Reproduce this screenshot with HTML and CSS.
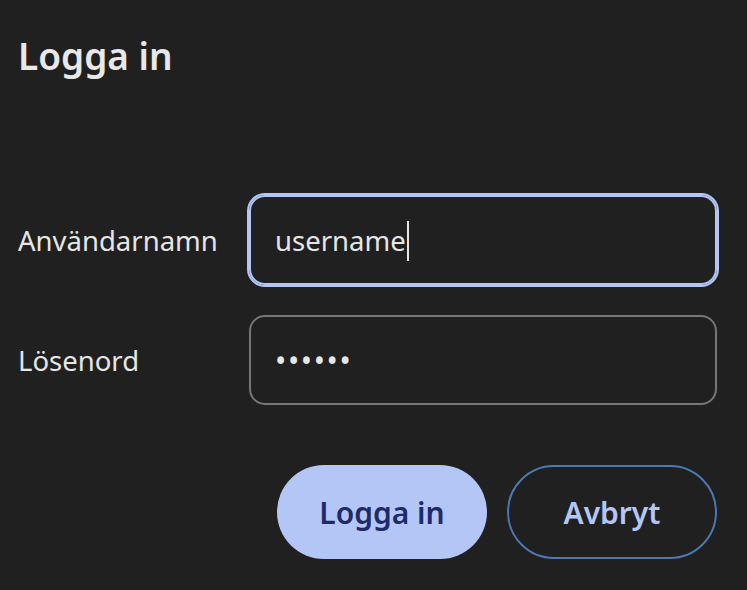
FILE: index.html
```html
<!DOCTYPE html>
<html lang="sv">
<head>
<meta charset="utf-8">
<title>Logga in</title>
<link rel="stylesheet" href="styles.css">
</head>
<body>
<main class="dialog">
  <h1 class="title">Logga in</h1>
  <form class="form">
    <label class="label" for="user">Användarnamn</label>
    <div class="field field-focused" id="user"><span class="value">username</span><span class="caret"></span></div>
    <label class="label" for="pass">Lösenord</label>
    <div class="field" id="pass"><span class="value dots">••••••</span></div>
  </form>
  <div class="actions">
    <button class="btn btn-primary" type="button">Logga in</button>
    <button class="btn btn-outline" type="button">Avbryt</button>
  </div>
</main>
</body>
</html>
```
FILE: styles.css
```css
html, body {
  margin: 0;
  padding: 0;
  background: #202020;
}
body {
  font-family: "Noto Sans", "Open Sans", sans-serif;
  color: #e6e6e6;
}
.dialog {
  padding: 32px 30px 0 18px;
}
.title {
  margin: 0;
  font-size: 37px;
  font-weight: 600;
  line-height: 48px;
  color: #e8e8e8;
}
.form {
  margin-top: 115px;
  display: grid;
  grid-template-columns: 231px 1fr;
  row-gap: 30px;
  align-items: center;
}
.label {
  font-size: 27.5px;
  line-height: 40px;
  padding-top: 1px;
}
.field {
  height: 90px;
  box-sizing: border-box;
  border: 2px solid #767676;
  border-radius: 16px;
  display: flex;
  align-items: center;
  padding-left: 24px;
  font-size: 27.5px;
}
.field-focused {
  outline: 2px solid #b3c6f6;
  border-color: #b3c6f6;
}
.value {
  line-height: 40px;
  padding-top: 1px;
}
.caret {
  width: 2px;
  height: 40px;
  background: #e6e6e6;
  margin-left: 1px;
  margin-top: 2px;
}
.dots {
  font-size: 30px;
  letter-spacing: 1.6px;
}
.actions {
  margin-top: 60px;
  display: flex;
  justify-content: flex-end;
  gap: 20px;
}
.btn {
  width: 210px;
  height: 94px;
  border-radius: 47px;
  font-family: "Noto Sans", "Open Sans", sans-serif;
  font-size: 30px;
  font-weight: 600;
  padding: 0;
  cursor: pointer;
}
.btn-primary {
  background: #b3c6f6;
  color: #1f2a68;
  border: none;
}
.btn-outline {
  background: transparent;
  color: #b3c6f6;
  border: 2px solid #4a78b2;
}
```
